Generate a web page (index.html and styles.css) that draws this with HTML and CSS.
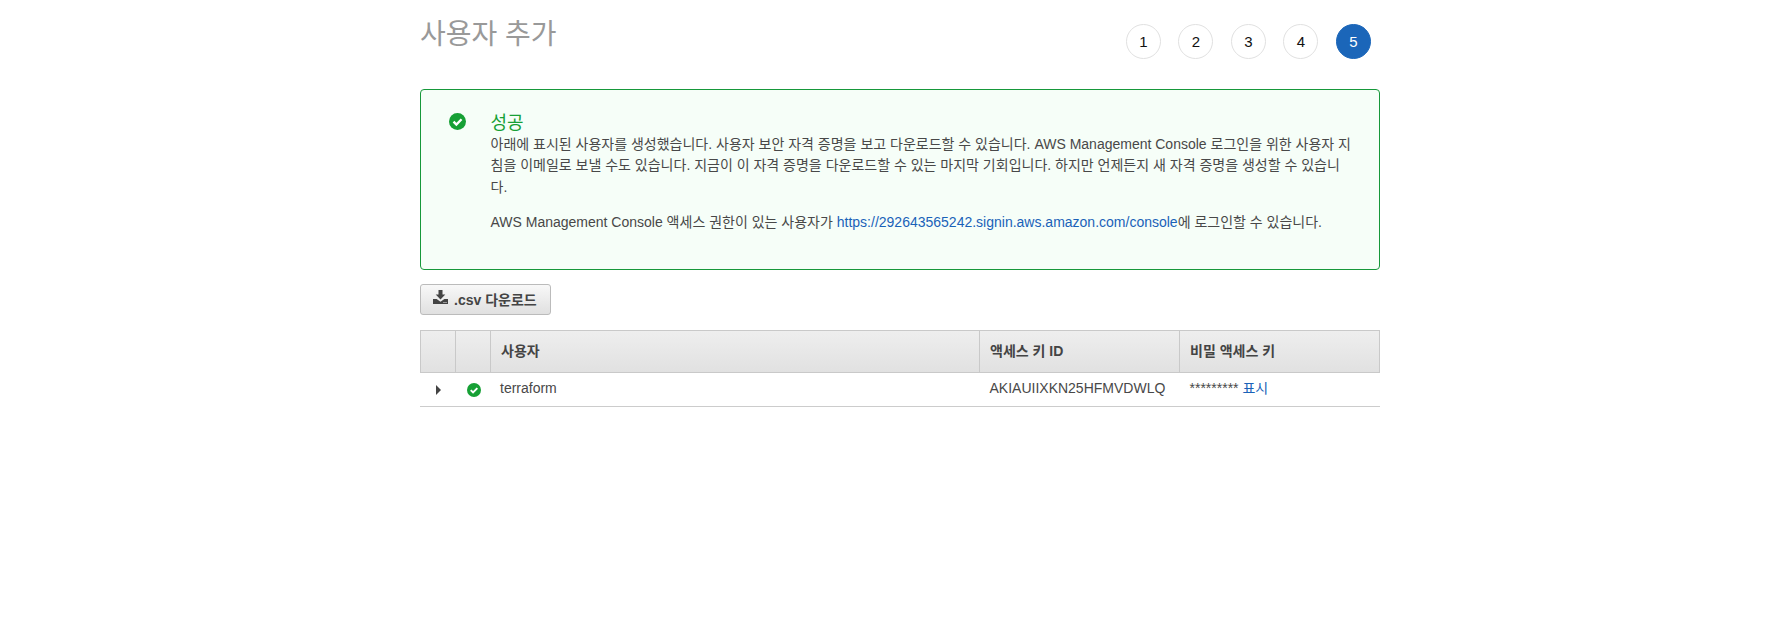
FILE: index.html
```html
<!DOCTYPE html>
<html lang="ko">
<head>
<meta charset="utf-8">
<title>사용자 추가</title>
<link rel="stylesheet" href="styles.css">
</head>
<body>
<svg class="defs" width="0" height="0" aria-hidden="true">
  <symbol id="check" viewBox="0 0 18 18">
    <circle cx="9" cy="9" r="9" fill="#16a035"/>
    <path d="M4.800 9.200 7.800 12.200 13.300 6.600" fill="none" stroke="#fff" stroke-width="2.500"/>
  </symbol>
</svg>
<main class="page">
  <header class="top">
    <h1 class="title">사용자 추가</h1>
    <ol class="steps">
      <li class="step">1</li>
      <li class="step">2</li>
      <li class="step">3</li>
      <li class="step">4</li>
      <li class="step step-active">5</li>
    </ol>
  </header>

  <section class="alert">
    <svg class="alert-icon"><use href="#check"/></svg>
    <div class="alert-body">
      <h2 class="alert-title">성공</h2>
      <p class="alert-text">아래에 표시된 사용자를 생성했습니다. 사용자 보안 자격 증명을 보고 다운로드할 수 있습니다. AWS Management Console 로그인을 위한 사용자 지침을 이메일로 보낼 수도 있습니다. 지금이 이 자격 증명을 다운로드할 수 있는 마지막 기회입니다. 하지만 언제든지 새 자격 증명을 생성할 수 있습니다.</p>
      <p class="alert-text alert-second">AWS Management Console 액세스 권한이 있는 사용자가 <a href="#">https://292643565242.signin.aws.amazon.com/console</a>에 로그인할 수 있습니다.</p>
    </div>
  </section>

  <button class="csv" type="button">
    <svg class="csv-icon" viewBox="0 0 15 14"><path d="M5.500 0h4v4.500h2.800L7.500 9.500 2.700 4.500h2.800z" fill="#444"/><path d="M0 9h3.600l3.900 2.800L11.400 9H15v5H0z" fill="#444"/><path d="M10.500 12.500h3.500" stroke="#eee" stroke-width="1" stroke-dasharray="1 1"/></svg>
    <span>.csv 다운로드</span>
  </button>

  <table class="grid">
    <colgroup>
      <col class="c-expand"><col class="c-state"><col class="c-user"><col class="c-key"><col class="c-secret">
    </colgroup>
    <thead>
      <tr><th></th><th></th><th>사용자</th><th>액세스 키 ID</th><th>비밀 액세스 키</th></tr>
    </thead>
    <tbody>
      <tr>
        <td class="center"><span class="caret"></span></td>
        <td class="center"><svg class="row-icon"><use href="#check"/></svg></td>
        <td class="user">terraform</td>
        <td>AKIAUIIXKN25HFMVDWLQ</td>
        <td>********* <a href="#">표시</a></td>
      </tr>
    </tbody>
  </table>
</main>
</body>
</html>
```
FILE: styles.css
```css
* { box-sizing: border-box; }
html, body { margin: 0; background: #fff; }
body {
  font-family: "Liberation Sans", "Noto Sans CJK KR", sans-serif;
  font-size: 14px;
  line-height: 21px;
  color: #484848;
}
a { color: #1a62b8; text-decoration: none; }
.defs { position: absolute; }

.page { width: 960px; margin-left: 420px; }

.top { display: flex; justify-content: space-between; height: 89px; }
.title {
  margin: 17px 0 0;
  font-size: 28px;
  line-height: 36px;
  font-weight: 400;
  color: #999;
}
.steps {
  display: flex;
  gap: 17.5px;
  list-style: none;
  margin: 24px 9.1px 0 0;
  padding: 0;
}
.step {
  width: 35px;
  height: 35px;
  border: 1px solid #e1e1e1;
  border-radius: 50%;
  display: flex;
  align-items: center;
  justify-content: center;
  font-size: 15px;
  color: #111;
  background: #fff;
}
.step-active { background: #1b66b9; border-color: #1b66b9; color: #fff; }

.alert {
  display: flex;
  height: 181px;
  padding: 22px 28px 0;
  background: #f6fef8;
  border: 1px solid #16983a;
  border-radius: 4px;
}
.alert-icon { width: 17px; height: 17px; margin-top: 1px; flex: none; }
.alert-body { flex: 1; min-width: 0; margin-left: 24.500px; }
.alert-title {
  margin: 0;
  font-size: 18px;
  line-height: 22px;
  font-weight: 400;
  color: #16a035;
}
.alert-text { margin: 0; line-height: 21.3px; word-break: break-all; }
.alert-second { margin-top: 14px; }

.csv {
  display: flex;
  align-items: center;
  gap: 6px;
  width: 131px;
  height: 31px;
  margin-top: 14px;
  padding: 0 0 2px 12px;
  border: 1px solid #bbb;
  border-radius: 3px;
  background: linear-gradient(#f8f8f8, #e0e0e0);
  font: bold 14px "Liberation Sans", "Noto Sans CJK KR", sans-serif;
  color: #444;
}
.csv-icon { width: 15px; height: 14px; margin-top: -3px; flex: none; }

.grid {
  width: 960px;
  margin-top: 15px;
  border-collapse: separate;
  border-spacing: 0;
  table-layout: fixed;
}
.c-expand { width: 36px; }
.c-state { width: 35px; }
.c-user { width: 489px; }
.c-key, .c-secret { width: 200px; }
.grid th {
  height: 43px;
  padding: 0 10px;
  border: 1px solid #c9c9c9;
  border-left: 0;
  background: linear-gradient(#eee, #e1e1e1);
  text-align: left;
  font-weight: bold;
  color: #444;
}
.grid th:first-child { border-left: 1px solid #c9c9c9; }
.grid td {
  height: 34px;
  padding: 0 9.500px 2px;
  border-bottom: 1px solid #ccc;
}
.grid td.user { padding-left: 9px; }
.grid td.center { padding: 0; vertical-align: middle; }
.caret {
  display: block;
  width: 5px;
  margin-left: 16px;
  border-left: 5px solid #444;
  border-top: 5px solid transparent;
  border-bottom: 5px solid transparent;
}
.row-icon { width: 14px; height: 14px; display: block; margin: 0 auto 0 11px; }
```
